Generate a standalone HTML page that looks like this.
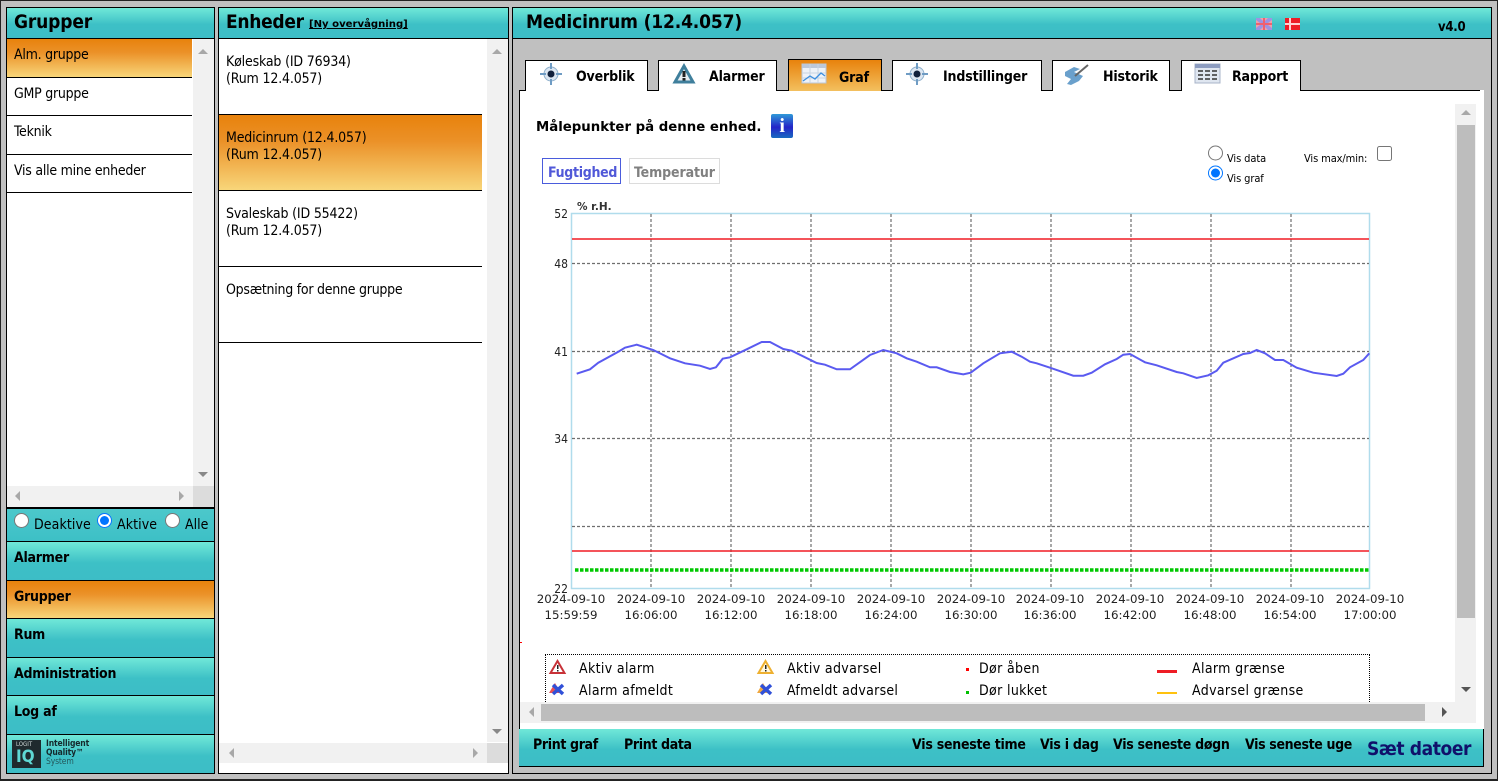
<!DOCTYPE html>
<html><head><meta charset="utf-8"><title>Medicinrum</title>
<style>
html,body{margin:0;padding:0}
body{width:1498px;height:781px;position:relative;overflow:hidden;background:#c0c0c0;font-family:"DejaVu Sans","Liberation Sans",sans-serif;font-stretch:condensed;color:#000}
div,a,input,svg,span.t{position:absolute;box-sizing:border-box}
.t{position:absolute;white-space:nowrap;line-height:16px;font-size:14px;letter-spacing:-.25px;margin-top:1px}
.b{font-weight:bold}
.teal{background:linear-gradient(#70e8d8 0%,#3dc0c6 55%,#3dbdc6 100%)}
.or{background:linear-gradient(#e8820c 0%,#eb9128 35%,#f8d67a 100%)}
.k{background:#000}
.sb{background:#f1f1f1}
.t.h{font-size:19px;font-weight:bold;line-height:24px;letter-spacing:-.15px;margin-top:0}
.m{font-weight:bold;font-size:14px}
.tab{background:#fff;border:1px solid #000;border-bottom:0}
.tl{font-weight:bold;font-size:14px;letter-spacing:-.15px}
.t.lg{font-size:14px;letter-spacing:.35px}
input{margin:0;padding:0}
</style></head><body>
<div style="left:0;top:0;width:1498px;height:781px;border:1px solid #222;border-width:1px 1px 2px 1px"></div>

<!-- left panel -->
<div class="k" style="left:6px;top:7px;width:209px;height:767px"></div>
<div class="teal" style="left:7px;top:8px;width:207px;height:30px"></div>
<span class="t h" style="left:14px;top:10px">Grupper</span>
<div style="left:7px;top:39px;width:207px;height:468px;background:#fff"></div>
<div class="or" style="left:7px;top:39px;width:185px;height:38px"></div>
<div class="k" style="left:7px;top:77px;width:185px;height:1px"></div>
<div class="k" style="left:7px;top:115px;width:185px;height:1px"></div>
<div class="k" style="left:7px;top:154px;width:185px;height:1px"></div>
<div class="k" style="left:7px;top:192px;width:185px;height:1px"></div>
<span class="t" style="left:14px;top:46px">Alm. gruppe</span>
<span class="t" style="left:14px;top:85px">GMP gruppe</span>
<span class="t" style="left:14px;top:123px">Teknik</span>
<span class="t" style="left:14px;top:162px">Vis alle mine enheder</span>
<div class="sb" style="left:193px;top:39px;width:21px;height:447px"></div>
<div class="sb" style="left:7px;top:486px;width:186px;height:21px"></div>
<div style="left:193px;top:486px;width:21px;height:21px;background:#dcdcdc"></div>
<div class="teal" style="left:7px;top:509px;width:207px;height:32px;background:linear-gradient(#4cc8cb,#3dc0c6)"></div>
<input type="radio" style="left:14px;top:513px;width:15px;height:15px">
<span class="t" style="left:34px;top:516px;letter-spacing:.1px">Deaktive</span>
<input type="radio" checked style="left:97px;top:513px;width:15px;height:15px">
<span class="t" style="left:117px;top:516px;letter-spacing:.1px">Aktive</span>
<input type="radio" style="left:165px;top:513px;width:15px;height:15px">
<span class="t" style="left:185px;top:516px;letter-spacing:0">Alle</span>
<div class="teal" style="left:7px;top:542px;width:207px;height:38px"></div>
<div class="or" style="left:7px;top:581px;width:207px;height:37px"></div>
<div class="teal" style="left:7px;top:619px;width:207px;height:38px"></div>
<div class="teal" style="left:7px;top:658px;width:207px;height:37px"></div>
<div class="teal" style="left:7px;top:696px;width:207px;height:38px"></div>
<div class="teal" style="left:7px;top:735px;width:207px;height:38px"></div>
<span class="t m" style="left:14px;top:549px">Alarmer</span>
<span class="t m" style="left:14px;top:588px">Grupper</span>
<span class="t m" style="left:14px;top:626px">Rum</span>
<span class="t m" style="left:14px;top:665px">Administration</span>
<span class="t m" style="left:14px;top:703px">Log af</span>
<div style="left:12px;top:740px;width:29px;height:28px;background:#1f2a2e"></div>
<span class="t" style="left:16px;top:741px;font-size:6px;line-height:8px;color:#cfd8d8;margin-top:0;letter-spacing:0">LOGIT</span>
<span class="t b" style="left:16px;top:748px;font-size:17px;line-height:18px;color:#5fd8d4;margin-top:0;letter-spacing:0">IQ</span>
<span class="t b" style="left:46px;top:740px;font-size:8.5px;line-height:9px;color:#152a2e;margin-top:0;letter-spacing:-.15px">Intelligent<br>Quality™<br><span style="font-weight:normal;color:#23575c">System</span></span>

<!-- middle panel -->
<div class="k" style="left:218px;top:7px;width:291px;height:767px"></div>
<div class="teal" style="left:219px;top:8px;width:289px;height:30px"></div>
<span class="t h" style="left:226px;top:10px;letter-spacing:-.3px">Enheder</span>
<span class="t b" style="left:309px;top:16px;text-decoration:underline;letter-spacing:0;font-stretch:normal;font-size:10.1px">[Ny overvågning]</span>
<div style="left:219px;top:39px;width:289px;height:734px;background:#fff"></div>
<div class="or" style="left:219px;top:115px;width:263px;height:75px"></div>
<div class="k" style="left:219px;top:114px;width:263px;height:1px"></div>
<div class="k" style="left:219px;top:190px;width:263px;height:1px"></div>
<div class="k" style="left:219px;top:266px;width:263px;height:1px"></div>
<div class="k" style="left:219px;top:342px;width:263px;height:1px"></div>
<span class="t" style="left:226px;top:53px;line-height:17px;letter-spacing:-.16px">Køleskab (ID 76934)<br>(Rum 12.4.057)</span>
<span class="t" style="left:226px;top:129px;line-height:17px;letter-spacing:-.16px">Medicinrum (12.4.057)<br>(Rum 12.4.057)</span>
<span class="t" style="left:226px;top:205px;line-height:17px;letter-spacing:-.16px">Svaleskab (ID 55422)<br>(Rum 12.4.057)</span>
<span class="t" style="left:226px;top:281px;line-height:17px">Opsætning for denne gruppe</span>
<div class="sb" style="left:487px;top:39px;width:21px;height:703px"></div>
<div class="sb" style="left:219px;top:743px;width:268px;height:20px"></div>
<div style="left:487px;top:743px;width:21px;height:20px;background:#dcdcdc"></div>

<!-- main panel -->
<div style="left:512px;top:7px;width:980px;height:767px;border:1px solid #000;background:#c0c0c0"></div>
<div class="teal" style="left:513px;top:8px;width:978px;height:30px"></div>
<div class="k" style="left:513px;top:38px;width:978px;height:1px"></div>
<span class="t h" style="left:526px;top:10px">Medicinrum (12.4.057)</span>
<span class="t b" style="left:1438px;top:19px;font-size:13px">v4.0</span>

<div style="left:519px;top:90px;width:965px;height:640px;background:#fff;border-left:1px solid #000"></div>
<div class="k" style="left:519px;top:90px;width:961px;height:1px"></div>

<div class="tab" style="left:525px;top:60px;width:123px;height:31px"></div>
<div class="tab" style="left:658px;top:60px;width:119px;height:31px"></div>
<div class="or" style="left:788px;top:59px;width:94px;height:32px;border:1px solid #000;border-bottom:0;background:linear-gradient(#e8820c,#f3c05f)"></div>
<div class="tab" style="left:892px;top:60px;width:150px;height:31px"></div>
<div class="tab" style="left:1052px;top:60px;width:118px;height:31px"></div>
<div class="tab" style="left:1181px;top:60px;width:120px;height:31px"></div>
<span class="t tl" style="left:576px;top:68px">Overblik</span>
<span class="t tl" style="left:709px;top:68px">Alarmer</span>
<span class="t tl" style="left:839px;top:69px">Graf</span>
<span class="t tl" style="left:943px;top:68px">Indstillinger</span>
<span class="t tl" style="left:1103px;top:68px">Historik</span>
<span class="t tl" style="left:1232px;top:68px">Rapport</span>

<span class="t b" style="left:536px;top:119px;font-size:13.3px;font-stretch:normal;letter-spacing:0">Målepunkter på denne enhed.</span>
<div style="left:771px;top:114px;width:22px;height:24px;border-radius:2px;background:linear-gradient(#2f9ad8,#2424c8 55%,#1a6ac0)"></div>
<span class="t b" style="left:771px;top:113px;width:22px;text-align:center;font-size:20px;line-height:24px;color:#fff;font-family:'Liberation Serif',serif">i</span>

<div style="left:542px;top:158px;width:79px;height:26px;border:1px solid #4a5cdc"></div>
<div style="left:629px;top:158px;width:91px;height:26px;border:1px solid #dcdcdc"></div>
<span class="t b" style="left:548px;top:164px;color:#5058d8;letter-spacing:-.3px">Fugtighed</span>
<span class="t b" style="left:634px;top:164px;color:#808080;letter-spacing:-.1px">Temperatur</span>

<input type="radio" style="left:1208px;top:145px;width:15px;height:16px">
<input type="radio" checked style="left:1208px;top:165px;width:15px;height:16px">
<span class="t" style="left:1227px;top:150px;font-size:11px;letter-spacing:-.1px">Vis data</span>
<span class="t" style="left:1227px;top:170px;font-size:11px;letter-spacing:-.1px">Vis graf</span>
<span class="t" style="left:1304px;top:150px;font-size:11px;letter-spacing:-.1px">Vis max/min:</span>
<input type="checkbox" style="left:1377px;top:146px;width:15px;height:15px">

<!-- legend (clipped) -->
<div style="left:520px;top:640px;width:935px;height:62px;overflow:hidden">
  <div style="left:25px;top:14px;width:825px;height:70px;border:1px dotted #000"></div>
  <span class="t lg" style="left:59px;top:20px">Aktiv alarm</span>
  <span class="t lg" style="left:59px;top:42px">Alarm afmeldt</span>
  <span class="t lg" style="left:267px;top:20px">Aktiv advarsel</span>
  <span class="t lg" style="left:267px;top:42px;letter-spacing:.27px">Afmeldt advarsel</span>
  <span class="t lg" style="left:459px;top:20px;letter-spacing:.35px">Dør åben</span>
  <span class="t lg" style="left:459px;top:42px;letter-spacing:.35px">Dør lukket</span>
  <span class="t lg" style="left:672px;top:20px">Alarm grænse</span>
  <span class="t lg" style="left:672px;top:42px">Advarsel grænse</span>
</div>

<!-- content scrollbars -->
<div class="sb" style="left:1455px;top:104px;width:21px;height:598px"></div>
<div style="left:1457px;top:125px;width:18px;height:493px;background:#bdbdbd"></div>
<div class="sb" style="left:520px;top:702px;width:935px;height:21px"></div>
<div style="left:541px;top:704px;width:884px;height:17px;background:#bdbdbd"></div>
<div class="sb" style="left:1455px;top:702px;width:21px;height:21px"></div>

<!-- bottom bar -->
<div class="teal" style="left:519px;top:729px;height:38px;border:solid #000;border-width:0 1px 1px 0;width:965px"></div>
<span class="t m" style="left:533px;top:736px;letter-spacing:-.35px">Print graf</span>
<span class="t m" style="left:624px;top:736px;letter-spacing:-.35px">Print data</span>
<span class="t m" style="left:912px;top:736px">Vis seneste time</span>
<span class="t m" style="left:1040px;top:736px">Vis i dag</span>
<span class="t m" style="left:1113px;top:736px;letter-spacing:-.3px">Vis seneste døgn</span>
<span class="t m" style="left:1245px;top:736px;letter-spacing:-.35px">Vis seneste uge</span>
<span class="t b" style="left:1367px;top:737px;font-size:19px;line-height:22px;color:#10106a;letter-spacing:-.4px">Sæt datoer</span>

<!-- graphics overlay -->
<svg width="1498" height="781" viewBox="0 0 1498 781" style="left:0;top:0" font-family="'DejaVu Sans',sans-serif">
  <!-- scroll arrows -->
  <g fill="#a8a8a8">
    <path d="M198 54l5-5 5 5z"/><path d="M198 472l5 5 5-5z" fill="#888"/>
    <path d="M20 491l-5 5 5 5z"/><path d="M179 491l5 5-5 5z"/>
    <path d="M492 54l5-5 5 5z"/><path d="M492 729l5 5 5-5z" fill="#888"/>
    <path d="M234 748l-5 5 5 5z"/><path d="M473 748l5 5-5 5z"/>
    <path d="M1461 115l5-5 5 5z"/>
    <path d="M1461 687l5 5 5-5z" fill="#555"/>
    <path d="M534 707l-5 5 5 5z"/>
    <path d="M1442 707l5 5-5 5z" fill="#555"/>
  </g>
  <!-- flags -->
  <rect x="1256" y="18" width="16" height="12" fill="#f0a0a8"/>
  <path d="M1256 18h4l4 4 4-4h4v2l-4 3h4v2h-4l4 3v2h-4l-4-4-4 4h-4v-2l4-3h-4v-2h4l-4-3z" fill="#8a90f0" opacity=".8"/>
  <path d="M1263 18h2v12h-2zM1256 23h16v2h-16z" fill="#f06070"/>
  <rect x="1285" y="18" width="15" height="12" fill="#ee1c25"/>
  <path d="M1289 18h2v12h-2zM1285 23h15v2h-15z" fill="#ffd0d0"/>
  <!-- target icons -->
  <g transform="translate(551,74)">
    <circle r="7" fill="#dbe6f2" stroke="#8fb0cc"/>
    <circle r="3.5" fill="#10203c"/>
    <path d="M-11 0h6M5 0h6M0-11v6M0 5v6" stroke="#6f9cc4" stroke-width="2"/>
  </g>
  <g transform="translate(917,74)">
    <circle r="7" fill="#dbe6f2" stroke="#8fb0cc"/>
    <circle r="3.5" fill="#10203c"/>
    <path d="M-11 0h6M5 0h6M0-11v6M0 5v6" stroke="#6f9cc4" stroke-width="2"/>
  </g>
  <!-- alarm tab -->
  <path d="M684 66l-9 16h18z" fill="#e8eef2" stroke="#3f7f9c" stroke-width="3"/>
  <path d="M682.500 71h3v6h-3zM682.500 78h3v2.500h-3z" fill="#222"/>
  <!-- graph tab -->
  <rect x="802" y="64" width="24" height="19" fill="#eef2f8" stroke="#b9c6d8"/>
  <rect x="802" y="64" width="24" height="4" fill="#bcc8da"/>
  <path d="M802 73h24M802 78h24M810 64v19M818 64v19" stroke="#c8d4e2"/>
  <path d="M803 81l7-5 5 3 6-6 4 3" stroke="#3d8fe0" fill="none" stroke-width="1.3"/>
  <!-- wrench tab -->
  <path d="M1065 72l9-5 6 2-6 3 9 4-4 5-8 4-4-1 4-5-6-3z" fill="#6aa0cc"/>
  <path d="M1075 76l13-11" stroke="#666" stroke-width="2"/>
  <!-- table tab -->
  <rect x="1195" y="64" width="25" height="19" fill="#dfe6f0" stroke="#a8b4c8"/>
  <rect x="1195" y="64" width="25" height="4" fill="#8c9cc0"/>
  <path d="M1198 71h5M1205 71h5M1212 71h5M1198 75h5M1205 75h5M1212 75h5M1198 79h5M1205 79h5M1212 79h5" stroke="#333" stroke-width="1.4"/>
  <!-- chart -->
  <rect x="571.5" y="213.5" width="798" height="375" fill="#fff" stroke="#b0dcec" stroke-width="1.5"/>
  <g stroke="#6e6e6e" stroke-width="1.2" stroke-dasharray="3 2" fill="none">
    <path d="M651 214v374M731 214v374M811 214v374M891 214v374M971 214v374M1051 214v374M1131 214v374M1211 214v374M1291 214v374"/>
    <path d="M572 263.500h797M572 351.500h797M572 438.500h797M572 526.500h797"/>
  </g>
  <path d="M572 239h797M572 551h797" stroke="#f01c24" stroke-width="1.500"/>
  <path d="M575 570h795" stroke="#00c800" stroke-width="3.500" stroke-dasharray="3.500 1.500"/>
  <polyline fill="none" stroke="#5a5af0" stroke-width="2" points="576.700,373.700 590,369.300 598.300,362.700 618.300,351.700 625,347.700 636.700,344.700 653.300,350 670,358.300 685,363.300 700,365.700 710,369 716,367.300 722.700,358.700 730,357.300 746.700,349.300 761.700,342 770,342 783.300,349 791.700,350.700 816.700,363 825,364.700 836.700,369.300 850,369.300 870,355 883.300,350 896.700,353.300 906.700,358.300 916.700,361.700 930,367.300 936.700,367.300 950,372 963.300,374.300 970.700,372.700 983.300,363.300 1000,353.300 1011.700,351.700 1021.700,356.700 1030,361.700 1036.700,363.300 1050,367.700 1073.300,375.700 1083.300,375.700 1091.700,372.700 1105,364.300 1116.700,359 1123.300,354.700 1130,354 1145,362.300 1156.700,365.300 1176.700,372 1183.300,373.300 1196.700,378 1208.300,375.300 1216.700,370.700 1223.300,362.700 1243.300,354 1250,353 1256.700,350 1265,353.300 1275,360 1283.300,360 1296.700,367.700 1313.300,372.700 1336.700,376 1343.300,373.700 1350,367.300 1363.300,360 1369.300,353.300"/>
  <g font-size="12" fill="#222" text-anchor="end">
    <text x="568" y="218">52</text><text x="568" y="268">48</text><text x="568" y="356">41</text><text x="568" y="443">34</text><text x="568" y="593">22</text>
  </g>
  <text x="577" y="210" font-size="10.500" font-weight="bold" fill="#333" style="font-stretch:normal">% r.H.</text>
  <g font-size="11.800" fill="#222" text-anchor="middle" style="font-stretch:normal">
    <text x="571" y="603">2024-09-10</text><text x="571" y="619">15:59:59</text>
    <text x="651" y="603">2024-09-10</text><text x="651" y="619">16:06:00</text>
    <text x="731" y="603">2024-09-10</text><text x="731" y="619">16:12:00</text>
    <text x="811" y="603">2024-09-10</text><text x="811" y="619">16:18:00</text>
    <text x="891" y="603">2024-09-10</text><text x="891" y="619">16:24:00</text>
    <text x="971" y="603">2024-09-10</text><text x="971" y="619">16:30:00</text>
    <text x="1050" y="603">2024-09-10</text><text x="1050" y="619">16:36:00</text>
    <text x="1130" y="603">2024-09-10</text><text x="1130" y="619">16:42:00</text>
    <text x="1210" y="603">2024-09-10</text><text x="1210" y="619">16:48:00</text>
    <text x="1290" y="603">2024-09-10</text><text x="1290" y="619">16:54:00</text>
    <text x="1370" y="603">2024-09-10</text><text x="1370" y="619">17:00:00</text>
  </g>
  <rect x="520" y="642" width="2" height="1" fill="#f00"/>
  <!-- legend icons -->
  <path d="M557.500 661l-7 12h14z" fill="#fff" stroke="#c83238" stroke-width="2"/>
  <path d="M557 665h1.500v4h-1.500zM557 670h1.500v1.500h-1.500z" fill="#222"/>
  <path d="M765.500 661l-7 12h14z" fill="#fff8e0" stroke="#eeb030" stroke-width="2"/>
  <path d="M765 665h1.500v4h-1.500zM765 670h1.500v1.500h-1.500z" fill="#222"/>
  <path d="M555 683l-6 10h12z" fill="#e85058"/>
  <path d="M553 685l10 9M563 685l-10 9" stroke="#3050d8" stroke-width="3.500"/>
  <path d="M763 683l-6 10h12z" fill="#f0a840"/>
  <path d="M761 685l10 9M771 685l-10 9" stroke="#3050d8" stroke-width="3.500"/>
  <rect x="966" y="668" width="3" height="3" fill="#f00"/>
  <rect x="966" y="691" width="3" height="3" fill="#00c000"/>
  <rect x="1157" y="670" width="20" height="3" fill="#ee1c25"/>
  <rect x="1157" y="692" width="20" height="2" fill="#ffc20e"/>
</svg>
</body></html>
